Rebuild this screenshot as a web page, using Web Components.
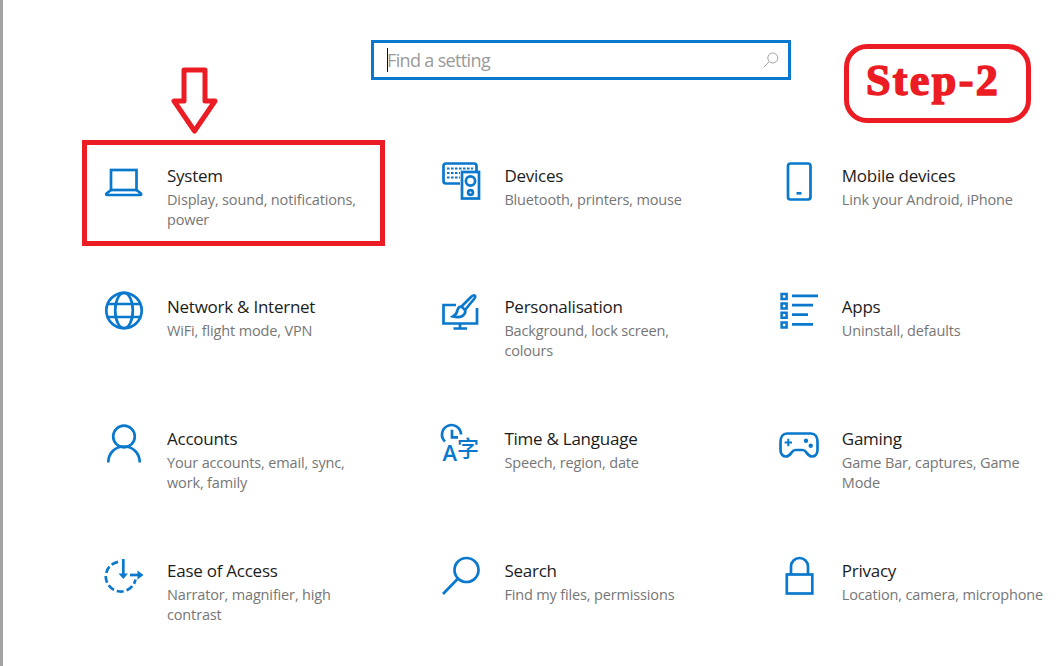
<!DOCTYPE html>
<html lang="en">
<head>
<meta charset="utf-8">
<title>Settings</title>
<style>
    html, body { margin: 0; background: #fff; }
</style>
</head>
<body>
<settings-page>
    <search-box slot="search" placeholder="Find a setting"></search-box>

    <settings-tile name="System" description="Display, sound, notifications, power">
        <svg slot="icon" viewBox="0 0 40 40">
            <rect x="7" y="10" width="25.5" height="20"/>
            <path d="M7 30 L2.6 33.4 Q1.4 35 3.4 35 H36 Q38 35 36.8 33.4 L32.5 30"/>
        </svg>
    </settings-tile>
    <settings-tile name="Devices" description="Bluetooth, printers, mouse">
        <svg slot="icon" viewBox="0 0 40 40">
            <path d="M19 23.5 H5 Q2.5 23.5 2.5 21 V6 Q2.5 3.5 5 3.5 H33 Q35.5 3.5 35.5 6 V11"/>
            <rect x="21" y="12" width="17" height="26.5"/>
            <circle cx="29.5" cy="21" r="4.6"/>
            <circle cx="29.5" cy="32.5" r="2.4"/>
            <path class="thin" stroke-width="2.2" stroke-dasharray="2.6 1.4" d="M6 8.5 H32"/>
            <path class="thin" stroke-width="2.2" stroke-dasharray="2.6 1.4" d="M6 13 H19"/>
            <path class="thin" stroke-width="2.2" stroke-dasharray="2.6 1.4" d="M6 17.5 H19"/>
        </svg>
    </settings-tile>
    <settings-tile name="Mobile devices" description="Link your Android, iPhone">
        <svg slot="icon" viewBox="0 0 40 40">
            <rect x="9" y="3.5" width="22.5" height="36" rx="2.5"/>
            <path d="M17.5 33.3 H22.5"/>
        </svg>
    </settings-tile>

    <settings-tile name="Network &amp; Internet" description="WiFi, flight mode, VPN">
        <svg slot="icon" viewBox="0 0 40 40">
            <circle cx="20" cy="19.5" r="17.7"/>
            <ellipse cx="20" cy="19.5" rx="8.8" ry="17.7"/>
            <path d="M4 13 H36 M4 26 H36"/>
        </svg>
    </settings-tile>
    <settings-tile name="Personalisation" description="Background, lock screen, colours">
        <svg slot="icon" viewBox="0 0 40 40">
            <path d="M15 14 H2.5 V32.5 H36 V17"/>
            <path d="M19 32.5 V37 M12.5 37.5 H26"/>
            <path d="M24 19 L33 8 Q35 5.6 33.8 4.6 Q32.6 3.6 30.5 5.6 L20.5 15.5"/>
            <path d="M20.5 15.5 Q17.5 15.5 16.5 19 Q16 23 12 25.5 Q20 27.5 23 23.5 Q25 21 24 19 Z"/>
        </svg>
    </settings-tile>
    <settings-tile name="Apps" description="Uninstall, defaults">
        <svg slot="icon" viewBox="0 0 40 40">
            <path class="thin" stroke-width="2.5" d="M2.6 3.1 H7.6 V8.1 H2.6 Z M2.6 12.4 H7.6 V17.4 H2.6 Z M2.6 21.8 H7.6 V26.8 H2.6 Z M2.6 31.4 H7.6 V36.4 H2.6 Z"/>
            <path d="M13 4.8 H39 M13 14.2 H34 M13 23.7 H29 M13 33.4 H34"/>
        </svg>
    </settings-tile>

    <settings-tile name="Accounts" description="Your accounts, email, sync, work, family">
        <svg slot="icon" viewBox="0 0 40 40">
            <circle cx="20" cy="13.5" r="10.8"/>
            <path d="M4.3 39.5 C4.3 30 11 23.5 20 23.5 C29 23.5 35.7 30 35.7 39.5"/>
        </svg>
    </settings-tile>
    <settings-tile name="Time &amp; Language" description="Speech, region, date">
        <svg slot="icon" viewBox="0 0 40 40">
            <path d="M4 18.5 A9.5 9.5 0 1 1 20 11.5"/>
            <path d="M11 6.8 V14.4 H17"/>
            <text class="glyph" x="1.5" y="37.5" font-size="22" font-weight="600">A</text>
            <text class="glyph cjk" x="16" y="32.5" font-size="22" font-weight="500">字</text>
        </svg>
    </settings-tile>
    <settings-tile name="Gaming" description="Game Bar, captures, Game Mode">
        <svg slot="icon" viewBox="0 0 40 40">
            <path d="M8 10.5 H32 C36 10.5 38.5 14 38.5 19 V27 C38.5 31 36 33.5 33 33.5 C30 33.5 28.5 31 27 29 C26 27.5 25 27 23.5 27 H16.5 C15 27 14 27.5 13 29 C11.5 31 10 33.5 7 33.5 C4 33.5 1.5 31 1.5 27 V19 C1.5 14 4 10.5 8 10.5 Z"/>
            <path class="thin" stroke-width="2" d="M5.6 19.5 H13 M9.3 15.8 V23.2"/>
            <circle class="dot" cx="27" cy="17.8" r="2.2"/>
            <circle class="dot" cx="31.7" cy="22.8" r="2.2"/>
        </svg>
    </settings-tile>

    <settings-tile name="Ease of Access" description="Narrator, magnifier, high contrast">
        <svg slot="icon" viewBox="0 0 40 40">
            <path d="M14 6.8 A15 15 0 1 0 31.5 24.5" stroke-dasharray="7 3"/>
            <path d="M19.3 4 V21"/>
            <path class="dot" d="M14.5 18.5 H24 L19.3 24 Z"/>
            <path d="M26 20 H35"/>
            <path class="dot" d="M33.5 15.5 L39.5 20 L33.5 24.5 Z"/>
        </svg>
    </settings-tile>
    <settings-tile name="Search" description="Find my files, permissions">
        <svg slot="icon" viewBox="0 0 40 40">
            <circle cx="25.5" cy="15" r="12"/>
            <path d="M17 23.5 L2 39"/>
        </svg>
    </settings-tile>
    <settings-tile name="Privacy" description="Location, camera, microphone">
        <svg slot="icon" viewBox="0 0 40 40">
            <rect x="7.8" y="19.5" width="25.5" height="19"/>
            <path d="M12 19.5 V11.5 A8.5 8.5 0 0 1 29 11.5 V19.5"/>
        </svg>
    </settings-tile>

    <callout-marks slot="overlay"></callout-marks>
</settings-page>

<script>
class SettingsPage extends HTMLElement {
    constructor() {
        super();
        this.attachShadow({ mode: "open" });
        this.shadowRoot.innerHTML = `
        <style>
            :host {
                display: block;
                position: relative;
                box-sizing: border-box;
                width: 1062px;
                height: 666px;
                overflow: hidden;
                background: #fff;
                border-left: 3px solid #a3a3a3;
                padding: 40px 0 0 101px;
            }
            .search-row {
                display: flex;
                padding-left: 267px;
                margin-bottom: 80px;
            }
            .tiles {
                display: grid;
                grid-template-columns: repeat(3, 337.4px);
                grid-template-rows: 131px 132px 132px 100px;
            }
        </style>
        <div class="search-row"><slot name="search"></slot></div>
        <div class="tiles"><slot></slot></div>
        <slot name="overlay"></slot>
        `;
    }
}

class SearchBox extends HTMLElement {
    constructor() {
        super();
        this.attachShadow({ mode: "open" });
        this.shadowRoot.innerHTML = `
        <style>
            :host {
                display: flex;
                align-items: center;
                box-sizing: border-box;
                width: 420px;
                height: 40px;
                border: 3px solid #0a78cc;
                padding: 0 9px 0 13px;
                font-family: "Open Sans", sans-serif;
            }
            .caret {
                width: 1px;
                height: 24px;
                background: #111;
                flex: none;
            }
            .placeholder {
                flex: 1;
                margin-left: -1px;
                font-size: 18px;
                letter-spacing: -0.65px;
                color: #9a9a9a;
            }
            svg {
                width: 16px;
                height: 16px;
                fill: none;
                stroke: #a2a2a2;
                stroke-width: 1;
            }
        </style>
        <span class="caret"></span>
        <span class="placeholder"></span>
        <svg viewBox="0 0 16 16">
            <circle cx="9.8" cy="6" r="5"/>
            <path d="M6.3 9.6 L0.8 15.2"/>
        </svg>
        `;
    }

    connectedCallback() {
        this.shadowRoot.querySelector(".placeholder").textContent = this.getAttribute("placeholder") || "";
    }
}

class SettingsTile extends HTMLElement {
    constructor() {
        super();
        this.attachShadow({ mode: "open" });
        this.shadowRoot.innerHTML = `
        <style>
            :host {
                display: flex;
                font-family: "Open Sans", sans-serif;
            }
            .icon {
                flex: none;
                width: 63px;
            }
            ::slotted(svg) {
                display: block;
                width: 40px;
                height: 40px;
                fill: none;
                stroke: #0a78cc;
                stroke-width: 2.7;
                overflow: visible;
            }
            .text {
                width: 204px;
                padding-top: 4px;
            }
            .name {
                font-size: 17px;
                line-height: 24px;
                letter-spacing: -0.25px;
                color: #1c1c1c;
            }
            .description {
                margin-top: 2px;
                font-size: 14.5px;
                line-height: 20px;
                letter-spacing: -0.15px;
                color: #767676;
            }
        </style>
        <div class="icon"><slot name="icon"></slot></div>
        <div class="text">
            <div class="name"></div>
            <div class="description"></div>
        </div>
        `;
    }

    connectedCallback() {
        this.shadowRoot.querySelector(".name").textContent = this.getAttribute("name") || "";
        this.shadowRoot.querySelector(".description").textContent = this.getAttribute("description") || "";

        // these sit in the light DOM, so ::slotted can't reach them
        this.querySelectorAll(".dot").forEach(el => {
            el.setAttribute("fill", "#0a78cc");
            el.setAttribute("stroke", "none");
        });
        this.querySelectorAll(".glyph").forEach(el => {
            el.setAttribute("fill", "#0a78cc");
            el.setAttribute("stroke", "none");
            el.setAttribute("font-family", el.classList.contains("cjk")
                ? '"Noto Sans CJK SC", sans-serif'
                : '"Open Sans", sans-serif');
        });
    }
}

class CalloutMarks extends HTMLElement {
    constructor() {
        super();
        this.attachShadow({ mode: "open" });
        this.shadowRoot.innerHTML = `
        <style>
            :host {
                display: block;
                color: #ec1c24;
            }
            .frame {
                position: absolute;
                left: 79px;
                top: 140px;
                width: 303px;
                height: 106px;
                box-sizing: border-box;
                border: 5px solid currentColor;
            }
            .arrow {
                position: absolute;
                left: 163px;
                top: 64px;
                width: 54px;
                height: 74px;
                fill: none;
                stroke: currentColor;
                stroke-width: 5;
                stroke-linejoin: round;
            }
            .step {
                position: absolute;
                left: 841px;
                top: 44px;
                width: 187px;
                height: 79px;
                box-sizing: border-box;
                display: flex;
                align-items: center;
                justify-content: center;
                padding: 0 9px 7px 0;
                border: 5px solid currentColor;
                border-radius: 23px;
                font-family: "Liberation Serif", serif;
                font-weight: bold;
                font-size: 44px;
                letter-spacing: 2.4px;
                -webkit-text-stroke: 1.6px currentColor;
            }
        </style>
        <div class="frame"></div>
        <svg class="arrow" viewBox="0 0 54 74">
            <path d="M18 6 H39 V37 H49 L28.5 67 L8 37 H18 Z"/>
        </svg>
        <div class="step">Step-2</div>
        `;
    }
}

customElements.define("settings-page", SettingsPage);
customElements.define("search-box", SearchBox);
customElements.define("settings-tile", SettingsTile);
customElements.define("callout-marks", CalloutMarks);
</script>
</body>
</html>
